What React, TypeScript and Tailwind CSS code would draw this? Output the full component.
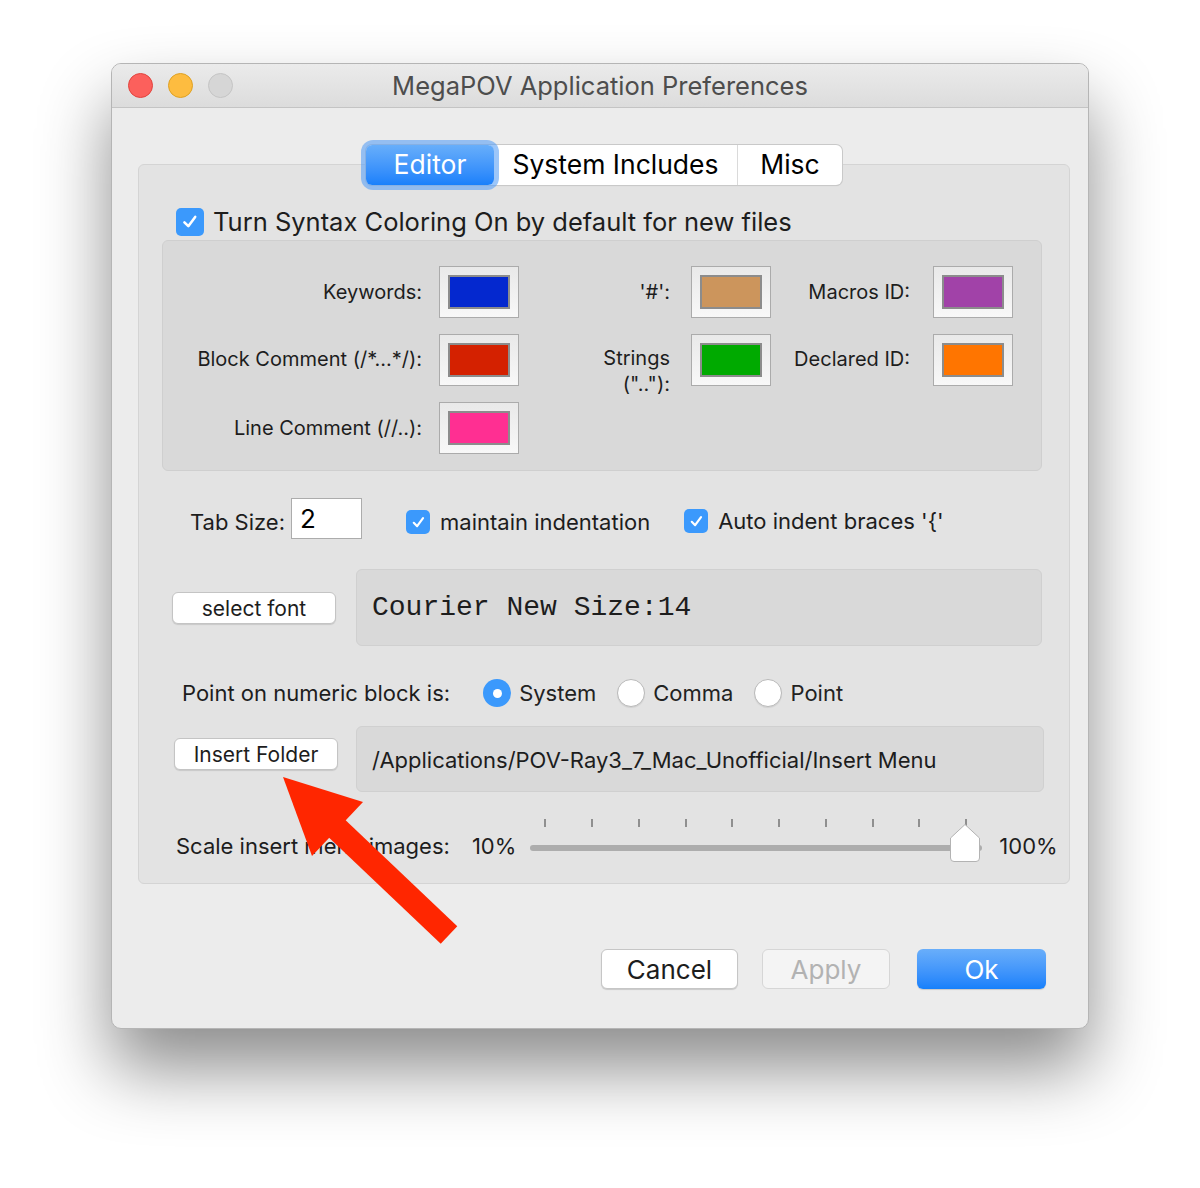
import React from 'react';

const sys = "font-['Inter','Liberation_Sans',sans-serif]";

const Check: React.FC<{ size: number }> = ({ size }) => (
  <span
    className="flex shrink-0 items-center justify-center rounded-[5px] bg-[#3b99fc]"
    style={{ width: size, height: size }}
  >
    <svg viewBox="0 0 20 20" width={size * 0.7} height={size * 0.7}>
      <path d="M4.5 10.5 L8.5 14.5 L15.5 5" fill="none" stroke="white" strokeWidth="2.6" strokeLinecap="round" strokeLinejoin="round" />
    </svg>
  </span>
);

const Radio: React.FC<{ on?: boolean; label: string }> = ({ on, label }) => (
  <div className="flex items-center gap-[8px]">
    {on ? (
      <span className="flex h-[28px] w-[28px] items-center justify-center rounded-full bg-[#3b99fc]">
        <span className="h-[9px] w-[9px] rounded-full bg-white" />
      </span>
    ) : (
      <span className="h-[28px] w-[28px] rounded-full border border-[#b9b9b9] bg-white shadow-[0_1px_1px_rgba(0,0,0,0.08)]" />
    )}
    <span className="text-[22px] text-[#222]">{label}</span>
  </div>
);

const Well: React.FC<{ color: string }> = ({ color }) => (
  <div className="flex h-[52px] w-[80px] shrink-0 items-center justify-center border border-[#ababab] bg-gradient-to-b from-[#e9e9e9] to-[#f8f8f8]">
    <div className="h-[34px] w-[62px] border-2 border-[#8c8c8c]" style={{ backgroundColor: color }} />
  </div>
);

const Label: React.FC<{ w: string; children: React.ReactNode }> = ({ w, children }) => (
  <div className={`${w} shrink-0 text-right text-[20px] leading-[26px] text-[#1d1d1d]`}>{children}</div>
);

const App: React.FC = () => {
  const ticks = [0, 1, 2, 3, 4, 5, 6, 7, 8, 9];

  return (
    <div className={`relative h-[1188px] w-[1200px] overflow-hidden bg-white pt-[63px] ${sys}`}>
      {/* Window */}
      <div className="mx-auto w-[978px] overflow-hidden rounded-[10px] border border-[#b5b5b5] bg-[#ececec] shadow-[0_40px_70px_rgba(0,0,0,0.45)]">
        {/* Title bar */}
        <div className="relative flex h-[44px] items-center border-b border-[#c4c4c4] bg-gradient-to-b from-[#ebebeb] to-[#dcdcdc] pl-[16px]">
          <div className="flex gap-[15px]">
            <span className="h-[25px] w-[25px] rounded-full border border-[#e0443e] bg-[#fc605c]" />
            <span className="h-[25px] w-[25px] rounded-full border border-[#dea123] bg-[#fdbc40]" />
            <span className="h-[25px] w-[25px] rounded-full border border-[#c4c4c4] bg-[#d6d6d6]" />
          </div>
          <div className="absolute inset-0 flex items-center justify-center pt-[2px] text-[25.5px] text-[#4d4d4d]">
            MegaPOV Application Preferences
          </div>
        </div>

        {/* Body */}
        <div className="pt-[56px]">
          <div className="ml-[26px] w-[932px] rounded-[6px] border border-[#d4d4d4] bg-[#e3e3e3] pb-[22px]">
            {/* Tabs */}
            <div className="-mt-[20px] flex justify-center">
              <div className="flex h-[40px] rounded-[6px] bg-white text-[26.5px] text-black shadow-[0_0_0_1px_#c9c9c9,0_1px_1px_rgba(0,0,0,0.15)]">
                <div className="rounded-[7px] shadow-[0_0_0_5px_rgba(90,160,245,0.6)]">
                  <div className="flex h-[40px] w-[128px] items-center justify-center rounded-[6px] bg-gradient-to-b from-[#67aefa] to-[#1880fb] text-white">
                    Editor
                  </div>
                </div>
                <div className="flex w-[244px] items-center justify-center border-r border-[#dadada]">System Includes</div>
                <div className="flex w-[104px] items-center justify-center">Misc</div>
              </div>
            </div>

            {/* Syntax coloring checkbox */}
            <div className="mt-[23px] ml-[37px] flex h-[28px] items-center gap-[9px]">
              <Check size={28} />
              <span className="text-[25.5px] text-[#1d1d1d]">Turn Syntax Coloring On by default for new files</span>
            </div>

            {/* Color wells */}
            <div className="mt-[4px] ml-[23px] flex h-[231px] w-[880px] flex-col gap-[16px] rounded-[6px] border border-[#cfcfcf] bg-[#d9d9d9] pt-[25px]">
              <div className="flex h-[52px] items-center">
                <Label w="w-[259px]">Keywords:</Label>
                <div className="ml-[17px]"><Well color="#0428cf" /></div>
                <Label w="w-[151px]">'#':</Label>
                <div className="ml-[21px]"><Well color="#cc955c" /></div>
                <Label w="w-[139px]">Macros ID:</Label>
                <div className="ml-[23px]"><Well color="#a142a8" /></div>
              </div>
              <div className="flex h-[52px] items-start">
                <div className="pt-[12px]"><Label w="w-[259px]">Block Comment (/*...*/):</Label></div>
                <div className="ml-[17px]"><Well color="#d42100" /></div>
                <div className="pt-[11px]"><Label w="w-[151px]">Strings<br />(".."):</Label></div>
                <div className="ml-[21px]"><Well color="#00aa00" /></div>
                <div className="pt-[12px]"><Label w="w-[139px]">Declared ID:</Label></div>
                <div className="ml-[23px]"><Well color="#ff7500" /></div>
              </div>
              <div className="flex h-[52px] items-center">
                <Label w="w-[259px]">Line Comment (//..):</Label>
                <div className="ml-[17px]"><Well color="#ff2f92" /></div>
              </div>
            </div>

            {/* Tab size row */}
            <div className="mt-[27px] ml-[51px] flex h-[41px] items-center text-[22px] text-[#1d1d1d]">
              <span className="mt-[7px]">Tab Size:</span>
              <div className="ml-[6px] flex h-[41px] w-[71px] items-center border border-[#acacac] bg-white pl-[8px] text-[26px] text-black">2</div>
              <div className="ml-[44px] mt-[7px] flex items-center gap-[10px]">
                <Check size={24} />
                <span>maintain indentation</span>
              </div>
              <div className="ml-[34px] mt-[5px] flex items-center gap-[10px]">
                <Check size={24} />
                <span>Auto indent braces '{'{'}'</span>
              </div>
            </div>

            {/* Font row */}
            <div className="mt-[30px] ml-[33px] flex items-center gap-[20px]">
              <button className="h-[32px] w-[164px] rounded-[6px] border border-[#c4c4c4] bg-white text-[21px] text-[#1d1d1d] shadow-[0_1px_1px_rgba(0,0,0,0.12)]">
                select font
              </button>
              <div className="flex h-[77px] w-[686px] items-center rounded-[6px] border border-[#d0d0d0] bg-[#d9d9d9] pl-[15px] font-['Liberation_Mono',monospace] text-[28px] text-[#1d1d1d]">
                Courier New Size:14
              </div>
            </div>

            {/* Point row */}
            <div className="mt-[33px] ml-[43px] flex h-[28px] items-center">
              <span className="text-[22px] text-[#1d1d1d]">Point on numeric block is:</span>
              <div className="ml-[33px] flex items-center gap-[21px]">
                <Radio on label="System" />
                <Radio label="Comma" />
                <Radio label="Point" />
              </div>
            </div>

            {/* Insert folder row */}
            <div className="mt-[19px] ml-[35px] flex items-start gap-[18px]">
              <button className="mt-[12px] h-[32px] w-[164px] rounded-[6px] border border-[#c4c4c4] bg-white text-[21px] text-[#1d1d1d] shadow-[0_1px_1px_rgba(0,0,0,0.12)]">
                Insert Folder
              </button>
              <div className="flex h-[66px] w-[688px] items-center rounded-[6px] border border-[#d0d0d0] bg-[#d9d9d9] pl-[15px] pt-[3px] text-[22px] text-[#1d1d1d]">
                /Applications/POV-Ray3_7_Mac_Unofficial/Insert Menu
              </div>
            </div>

            {/* Scale row */}
            <div className="mt-[27px] ml-[37px] flex items-end text-[22px] text-[#1d1d1d]">
              <span className="mb-[-2px]">Scale insert menu images:</span>
              <span className="ml-[22px] mb-[-2px]">10%</span>
              <div className="relative ml-[14px] h-[42px] w-[452px]">
                <div className="flex justify-between px-[14px] pr-[15px]">
                  {ticks.map((t) => (
                    <span key={t} className="h-[8px] w-[2px] bg-[#8f8f8f]" />
                  ))}
                </div>
                <div className="absolute left-0 right-0 top-[26px] h-[6px] rounded-full bg-[#adadad]" />
                <svg className="absolute right-0 top-[4px]" width="34" height="40" viewBox="0 0 34 40">
                  <path d="M2.5 15 L17 1.5 L31.5 15 V35 Q31.5 38.5 28 38.5 H6 Q2.5 38.5 2.5 35 Z" fill="white" stroke="#b3b3b3" strokeWidth="1" />
                </svg>
              </div>
              <span className="ml-[17px] mb-[-2px]">100%</span>
            </div>
          </div>

          {/* Dialog buttons */}
          <div className="mt-[65px] mr-[42px] mb-[39px] flex justify-end text-[26px]">
            <button className="h-[40px] w-[137px] rounded-[6px] border border-[#c6c6c6] bg-white text-[#1d1d1d] shadow-[0_1px_1px_rgba(0,0,0,0.15)]">
              Cancel
            </button>
            <button className="ml-[24px] h-[40px] w-[128px] rounded-[6px] border border-[#d6d6d6] bg-[#f4f4f4] text-[#b2b2b2]">
              Apply
            </button>
            <button className="ml-[27px] h-[40px] w-[129px] rounded-[6px] bg-gradient-to-b from-[#69aefa] to-[#1580fb] text-white shadow-[0_1px_1px_rgba(0,0,0,0.15)]">
              Ok
            </button>
          </div>
        </div>
      </div>

      {/* Annotation arrow */}
      <svg className="pointer-events-none absolute left-0 top-0" width="1200" height="1188">
        <line x1="330" y1="822" x2="449" y2="935" stroke="#ff2600" strokeWidth="24" />
        <polygon points="283,777 363,802 312,856" fill="#ff2600" />
      </svg>
    </div>
  );
};

export default App;
